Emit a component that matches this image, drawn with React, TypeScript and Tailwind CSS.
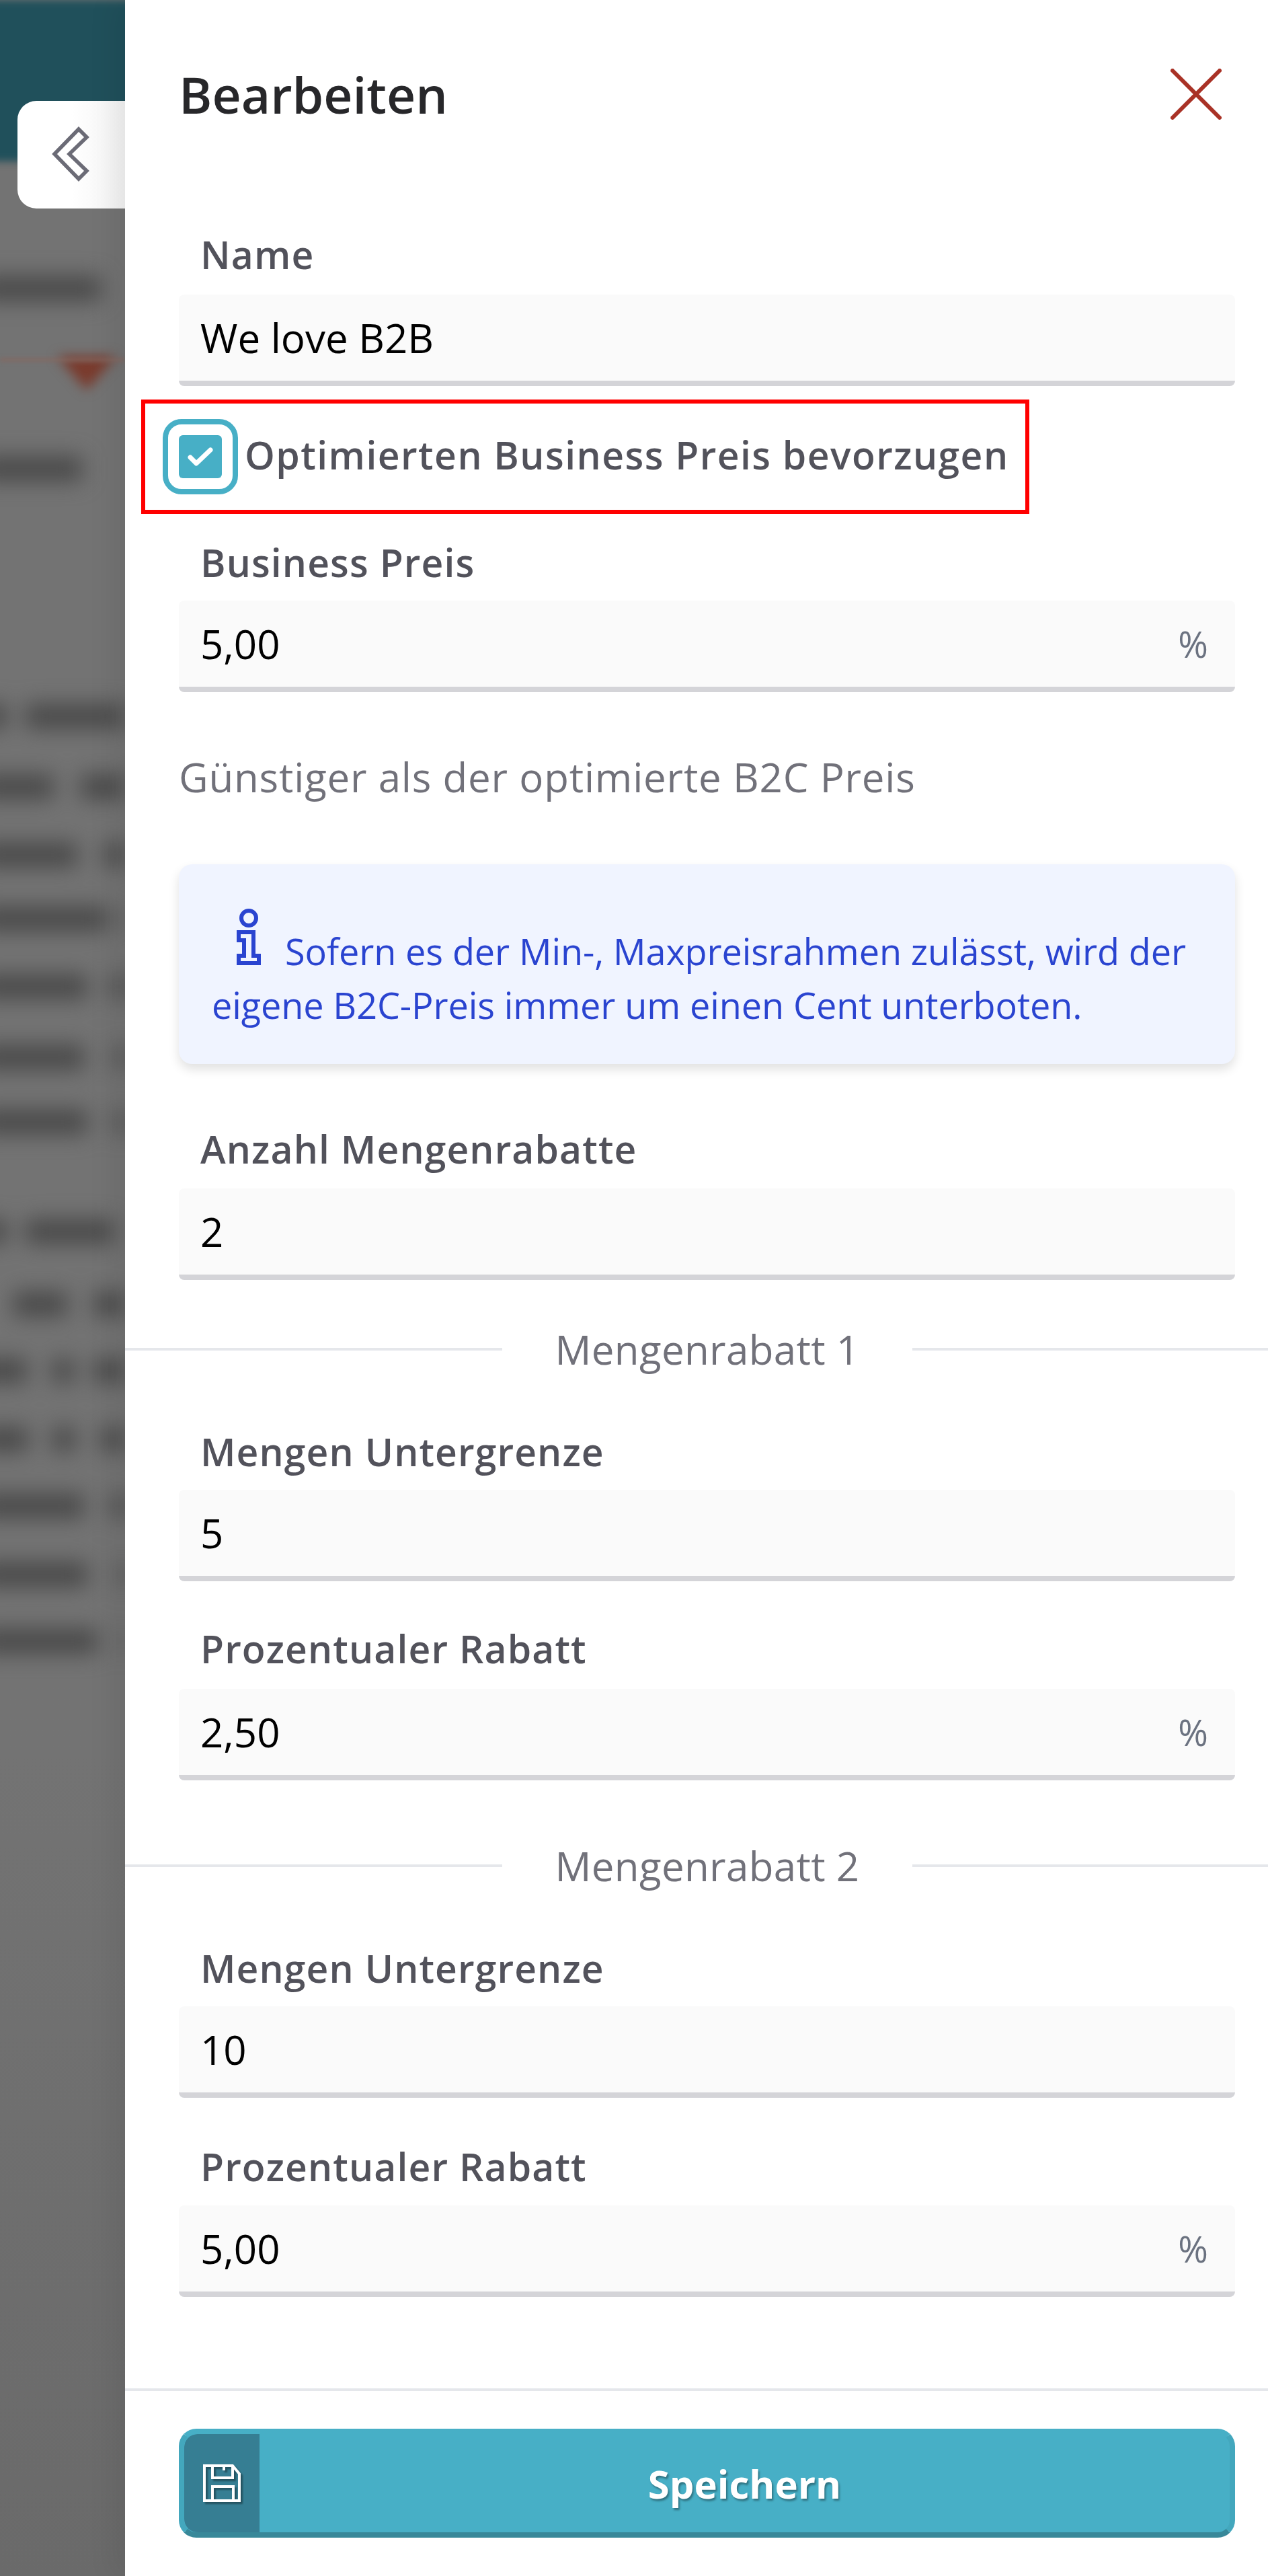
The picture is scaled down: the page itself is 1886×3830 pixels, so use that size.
import type { ReactNode } from "react";

const font = "font-['Open_Sans','Noto_Sans',sans-serif]";

// blurred page behind the drawer: [distance from the row above, bars as [start, width]]
const backdropRows: { gap: number; bars: number[][] }[] = [
  { gap: 201, bars: [[0, 150]] },
  { gap: 268, bars: [[0, 122]] },
  { gap: 368, bars: [[0, 10], [38, 148]] },
  { gap: 105, bars: [[0, 80], [120, 66]] },
  { gap: 101, bars: [[0, 115], [155, 31]] },
  { gap: 95, bars: [[0, 160], [180, 6]] },
  { gap: 101, bars: [[0, 130], [165, 21]] },
  { gap: 105, bars: [[0, 125], [170, 16]] },
  { gap: 96, bars: [[0, 130], [170, 16]] },
  { gap: 163, bars: [[0, 10], [38, 132]] },
  { gap: 108, bars: [[20, 80], [140, 46]] },
  { gap: 99, bars: [[0, 40], [78, 32], [140, 46]] },
  { gap: 102, bars: [[0, 42], [78, 34], [150, 36]] },
  { gap: 99, bars: [[0, 125], [165, 21]] },
  { gap: 102, bars: [[0, 130], [175, 11]] },
  { gap: 99, bars: [[0, 145], [180, 6]] },
];

function Backdrop() {
  return (
    <div className="relative w-[186px] shrink-0 overflow-hidden bg-gradient-to-b from-[#737373] from-[68%] to-[#6a6a6a]">
      <div className="-mx-[20px] h-[240px] bg-[#20505b] blur-[6px]" />
      <div className="-ml-[30px] w-[300px] blur-[16px]">
        {backdropRows.map((row, i) => (
          <div key={i} className="relative h-[24px]" style={{ marginTop: row.gap - 24 }}>
            {row.bars.map(([start, width]) => (
              <div
                key={start}
                className="absolute -top-[6px] h-[36px] bg-[#484848]"
                style={{ left: start === 0 ? 0 : start + 30, width: start === 0 ? width + 30 : width }}
              />
            ))}
          </div>
        ))}
      </div>
      {/* red marker of the page behind */}
      <div className="absolute left-[85px] top-[530px] h-0 w-0 border-x-[44px] border-t-[50px] border-x-transparent border-t-[#7a3a2c] blur-[9px]" />
      <div className="absolute left-0 top-[533px] h-[4px] w-[186px] bg-[#86675f] blur-[3px]" />

      <div className="absolute left-[26px] top-[150px] flex h-[160px] w-[160px] items-center rounded-l-[28px] bg-gradient-to-r from-white from-50% to-[#f3f3f3] pl-[50px]">
        <svg width="60" height="84" viewBox="0 0 60 84" className="text-[#6b6b76]" fill="none" stroke="currentColor" strokeWidth="5.5">
          <path d="M5 41 L41 4 L53 16 L27 41 L53 66 L41 78 Z" />
        </svg>
      </div>
    </div>
  );
}

function Label({ children }: { children: ReactNode }) {
  return <div className="flex h-[60px] items-center pl-[32px] text-[57px] font-semibold tracking-[1.1px] text-[#52525b]">{children}</div>;
}

function Input({ value, percent }: { value: string; percent?: boolean }) {
  return (
    <div className="flex h-[136px] items-center justify-between rounded-[8px] border-b-[8px] border-[#d4d4d8] bg-[#fafafa] pl-[32px] pr-[40px] text-[60px] text-black">
      <span>{value}</span>
      {percent && <span className="text-[54px] text-[#6b7280]">%</span>}
    </div>
  );
}

function Divider({ children }: { children: ReactNode }) {
  return (
    <div className="-ml-[80px] -mr-[49px] flex h-[60px] items-center text-[60px] tracking-[0.35px] text-[#71717a]">
      <div className="h-[4px] w-[561px] shrink-0 bg-[#e5e7eb]" />
      <div className="w-[610px] shrink-0 text-center">{children}</div>
      <div className="h-[4px] flex-1 bg-[#e5e7eb]" />
    </div>
  );
}

export default function App() {
  return (
    <div className={`flex h-[3830px] w-[1886px] overflow-hidden bg-white ${font}`}>
      <Backdrop />

      <div className="relative flex-1 bg-white pl-[80px] pr-[49px] shadow-[-16px_0_40px_rgba(0,0,0,0.07)]">
        <div className="flex h-[280px] items-center justify-between pr-[20px]">
          <h1 className="text-[75px] font-semibold text-[#27272a]">Bearbeiten</h1>
          <svg width="76" height="76" viewBox="0 0 76 76" fill="none" stroke="#a93226" strokeWidth="6" strokeLinecap="round">
            <path d="M3 3 L73 73 M73 3 L3 73" />
          </svg>
        </div>

        <div className="mb-[29px] mt-[69px]"><Label>Name</Label></div>
        <Input value="We love B2B" />

        {/* red annotation box around the checkbox */}
        <div className="-ml-[56px] mt-[20px] flex h-[170px] w-[1321px] items-center border-[6px] border-[#ff0000] pl-[26px]">
          <div className="flex h-[112px] w-[112px] shrink-0 items-center justify-center rounded-[28px] border-[8px] border-[#47afc6]">
            <div className="flex h-[64px] w-[64px] items-center justify-center rounded-[6px] bg-[#47afc6]">
              <svg width="38" height="30" viewBox="0 0 38 30" fill="none" stroke="white" strokeWidth="7" strokeLinecap="round" strokeLinejoin="round">
                <path d="M4 16 L13 25 L34 5" />
              </svg>
            </div>
          </div>
          <span className="-mt-[4px] ml-[10px] whitespace-nowrap text-[57px] font-semibold tracking-[1.45px] text-[#52525b]">Optimierten Business Preis bevorzugen</span>
        </div>

        <div className="mb-[26px] mt-[43px]"><Label>Business Preis</Label></div>
        <Input value="5,00" percent />

        <div className="mt-[96px] flex h-[60px] items-center text-[60px] tracking-[0.8px] text-[#71717a]">Günstiger als der optimierte B2C Preis</div>

        <div className="mt-[100px] h-[297px] rounded-[20px] bg-[#f0f4ff] pl-[49px] pr-[30px] pt-[66px] text-[54px] leading-[80px] tracking-[-0.1px] text-[#2a44d0] shadow-[0_8px_16px_rgba(0,0,0,0.12)]">
          <svg width="36" height="84" viewBox="0 0 36 84" className="ml-[37px] mr-[36px] inline-block align-baseline" fill="none" stroke="currentColor" strokeWidth="6">
            <circle cx="18" cy="14" r="11" />
            <path d="M3 35 H25 V70 H33 V81 H3 V70 H11 V47 H3 Z" />
          </svg>
          Sofern es der Min-, Maxpreisrahmen zulässt, wird der eigene B2C-Preis immer um einen Cent unterboten.
        </div>

        <div className="mb-[28px] mt-[97px]"><Label>Anzahl Mengenrabatte</Label></div>
        <Input value="2" />

        <div className="mt-[73px]"><Divider>Mengenrabatt 1</Divider></div>

        <div className="mb-[26px] mt-[93px]"><Label>Mengen Untergrenze</Label></div>
        <Input value="5" />
        <div className="mb-[29px] mt-[71px]"><Label>Prozentualer Rabatt</Label></div>
        <Input value="2,50" percent />

        <div className="mt-[97px]"><Divider>Mengenrabatt 2</Divider></div>

        <div className="mb-[26px] mt-[93px]"><Label>Mengen Untergrenze</Label></div>
        <Input value="10" />
        <div className="mb-[27px] mt-[73px]"><Label>Prozentualer Rabatt</Label></div>
        <Input value="5,00" percent />

        <div className="-ml-[80px] -mr-[49px] mt-[136px] h-[4px] bg-[#e5e7eb]" />

        <button className="mt-[56px] flex h-[162px] w-full overflow-hidden rounded-[26px] border-[8px] border-[#47afc6] border-b-[#388899] border-l-[#43a7bd] border-r-[#43a7bd] bg-[#47afc6]">
          <span className="flex h-full w-[112px] shrink-0 items-center justify-center rounded-l-[20px] bg-[#367e93]">
            <svg width="56" height="56" viewBox="0 0 56 56" fill="none" stroke="white" strokeWidth="4" className="drop-shadow-[3px_3px_1px_rgba(0,0,0,0.35)]">
              <path d="M2 2 H44 L54 14 V54 H2 Z" />
              <path d="M14 2 V20 H44 V4 M31 2 V9" />
              <path d="M14 54 V33 H45 V54" />
            </svg>
          </span>
          <span className="flex-1 self-center text-center text-[58px] font-bold text-white [text-shadow:2px_3px_3px_rgba(0,0,0,0.35)]">Speichern</span>
        </button>
      </div>
    </div>
  );
}
